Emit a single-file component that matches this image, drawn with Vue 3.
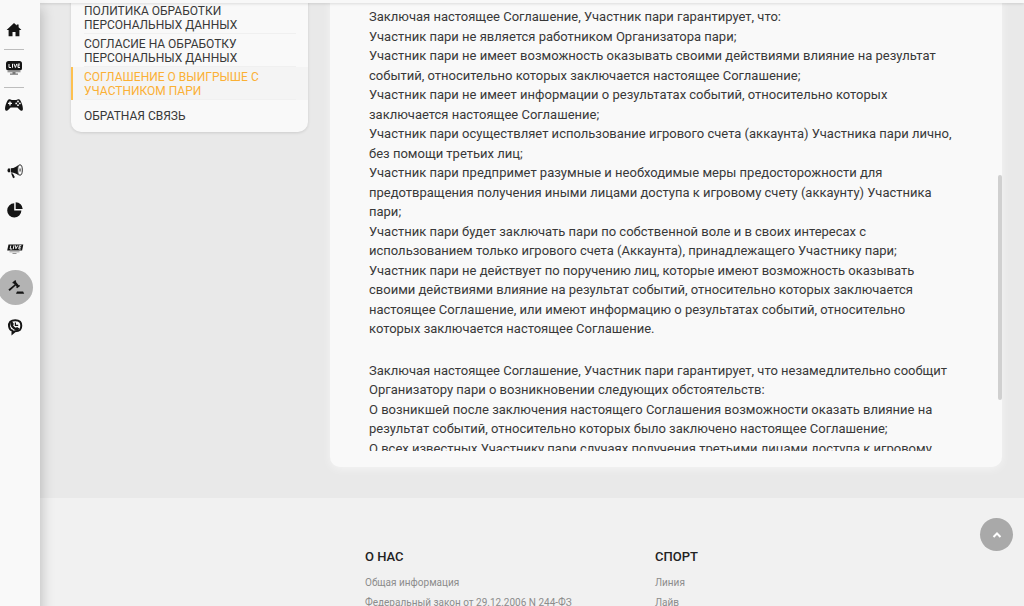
<script setup>
const menu = [
  { label: 'Политика обработки персональных данных' },
  { label: 'Согласие на обработку персональных данных' },
  { label: 'Соглашение о выигрыше с участником пари', active: true },
  { label: 'Обратная связь', tall: true },
]

const sections = [
  [
    'Заключая настоящее Соглашение, Участник пари гарантирует, что:',
    'Участник пари не является работником Организатора пари;',
    'Участник пари не имеет возможность оказывать своими действиями влияние на результат событий, относительно которых заключается настоящее Соглашение;',
    'Участник пари не имеет информации о результатах событий, относительно которых заключается настоящее Соглашение;',
    'Участник пари осуществляет использование игрового счета (аккаунта) Участника пари лично, без помощи третьих лиц;',
    'Участник пари предпримет разумные и необходимые меры предосторожности для предотвращения получения иными лицами доступа к игровому счету (аккаунту) Участника пари;',
    'Участник пари будет заключать пари по собственной воле и в своих интересах с использованием только игрового счета (Аккаунта), принадлежащего Участнику пари;',
    'Участник пари не действует по поручению лиц, которые имеют возможность оказывать своими действиями влияние на результат событий, относительно которых заключается настоящее Соглашение, или имеют информацию о результатах событий, относительно которых заключается настоящее Соглашение.',
  ],
  [
    'Заключая настоящее Соглашение, Участник пари гарантирует, что незамедлительно сообщит Организатору пари о возникновении следующих обстоятельств:',
    'О возникшей после заключения настоящего Соглашения возможности оказать влияние на результат событий, относительно которых было заключено настоящее Соглашение;',
    'О всех известных Участнику пари случаях получения третьими лицами доступа к игровому',
  ],
]

const footer = [
  { title: 'О нас', links: ['Общая информация', 'Федеральный закон от 29.12.2006 N 244-ФЗ'] },
  { title: 'Спорт', links: ['Линия', 'Лайв'] },
]
</script>

<template>
  <div class="page">
    <div class="topbar"></div>

    <nav class="rail" aria-label="Разделы">
      <a class="icon" href="#" aria-label="Главная">
        <svg width="16" height="16" viewBox="0 0 16 16"><path d="M8 1 .6 8h2v6.3h3.9V10h3v4.3h3.9V8h2L12.600 5.300V2.500h-1.800v1.100z" /></svg>
      </a>
      <hr />
      <a class="icon" href="#" aria-label="Лайв">
        <svg width="18" height="16" viewBox="0 0 18 16">
          <rect x="1" y="1" width="16" height="9.600" rx="2.500" />
          <path class="line" d="M4 4v3.500h2M7.500 3.800v3.900M9 3.800l1.400 3.700 1.400-3.700M15 4.100h-2v3.400h2M13 5.800h1.700" />
          <path class="soft" d="M2.500 11.300h13v1h-13zM7.500 12.300h3v1.300h-3zM5 13.500h8v1.200H5z" />
        </svg>
      </a>
      <hr />
      <a class="icon pad" href="#" aria-label="Игры">
        <svg width="20" height="16" viewBox="0 0 20 16">
          <path d="M5 2.300c1.700-.6 2.400.7 3.200.7h3.600c.8 0 1.500-1.300 3.200-.7 2.200.8 4.200 7.600 3.900 10-.2 1.700-2 2-3 .8L13.400 10.600H6.600l-2.500 2.500c-1 1.200-2.800.9-3-.8C.8 9.900 2.800 3.100 5 2.300z" />
          <path class="line wide" d="M6 4.400v4M4 6.400h4" />
          <g class="light"><circle cx="14" cy="4.500" r=".9" /><circle cx="14" cy="8.200" r=".9" /><circle cx="12.200" cy="6.400" r=".9" /><circle cx="15.900" cy="6.400" r=".9" /></g>
        </svg>
      </a>

      <div class="tools">
        <a class="icon" href="#" aria-label="Акции">
          <svg width="18" height="18" viewBox="0 0 18 18">
            <path d="M2 6.500h2.200v3.800H2q-1.200-1.900 0-3.800zM4.900 6.300C8.500 6 10.900 4.500 12.600 2.700v10.700c-1.800-1.700-4.200-2.700-7.700-3zM5 11.300l1.900.3 2 3.700-1.800.9z" />
            <ellipse class="ring" cx="14" cy="8" rx="2.300" ry="5.200" />
            <path class="soft" d="M13.300 6.500h1.600v3h-1.600z" />
          </svg>
        </a>
        <a class="icon" href="#" aria-label="Статистика">
          <svg width="18" height="18" viewBox="0 0 18 18"><path d="M8.200 2.300V9.500h7.200A7.100 7.100 0 1 1 8.200 2.300zM9.700 1.200A7 7 0 0 1 16.700 8.100H9.700z" /></svg>
        </a>
        <a class="icon" href="#" aria-label="Лайв результаты">
          <svg width="18" height="14" viewBox="0 0 18 14">
            <path d="M2.500 2.500h14.800l-1.200 6H1.200z" />
            <path class="line" d="M4.800 3.500 4.100 7h2M8 3.300 7.200 7.200M9.500 3.400l.4 3.300 2-3.300M15.300 3.700h-1.900L12.800 7h1.900M13.200 5.300h1.600" />
            <path class="soft" d="M3.500 9.500h10v.8h-10zM6.500 11.200h4v.8h-4z" />
          </svg>
        </a>
        <a class="icon current" href="#" aria-label="Правила">
          <svg width="18" height="18" viewBox="0 0 18 18">
            <path d="m5.300 3.500 3-2.400.9 1.100-.4.500 2.900 3.600.6-.4.800 1-3 2.400-.9-1.100.4-.5-.9-1.100-6 5.500-1.300-1.500 6.200-5.100-.9-1.200-.6.400zM10 12.600h6.100l1.100 2.200H9z" />
          </svg>
        </a>
        <a class="icon" href="#" aria-label="Заказать звонок">
          <svg width="18" height="18" viewBox="0 0 18 18">
            <path class="thick" d="M4.300 3.700C6.500 1.700 12 1.700 14 3.700c1.700 1.800 1.700 6.200 0 8-1.300 1.200-3 1.500-5 1.500L6.500 15.300v-2.500C2.500 11.700 2.200 6 4.300 3.700z" />
            <path d="M4.300 4.500 6.100 3.200l1.800 2.700-.8 1.300c.6 1.300 1.500 2 2.700 2.500l1.300-.8 2.300 1.500-1.300 1.800C8.500 13 4 9.500 4.300 4.500z" />
            <path class="hand" d="M9.400 4.500v2.900h2.800" />
          </svg>
        </a>
      </div>
    </nav>

    <div class="body">
      <main>
        <aside class="menu">
          <a v-for="m in menu" :key="m.label" href="#" :class="{ active: m.active, tall: m.tall }">
            <span>{{ m.label }}</span>
          </a>
        </aside>
        <article class="card">
          <div class="scroll">
            <section v-for="(s, i) in sections" :key="i">
              <p v-for="p in s" :key="p">{{ p }}</p>
            </section>
          </div>
          <div class="thumb"></div>
        </article>
      </main>

      <footer>
        <section v-for="c in footer" :key="c.title">
          <h2>{{ c.title }}</h2>
          <a v-for="l in c.links" :key="l" href="#">{{ l }}</a>
        </section>
      </footer>
    </div>

    <button class="up" type="button" aria-label="Наверх">
      <svg width="12" height="12" viewBox="0 0 12 12"><path d="m2.500 8 3.500-3.500L9.500 8" /></svg>
    </button>
  </div>
</template>

<style>
body {
  margin: 0;
  background: #f1f1f1;
}
</style>

<style scoped>
.page {
  height: 100vh;
  overflow: hidden;
  position: relative;
  display: grid;
  grid-template-columns: 40px 1fr;
  font-family: Roboto, "Liberation Sans", sans-serif;
  color: #383838;
}
a {
  color: inherit;
  text-decoration: none;
}
.topbar {
  position: absolute;
  inset: 0 0 auto;
  height: 3px;
  background: #f8f8f8;
  box-shadow: 0 1px 3px rgba(0, 0, 0, 0.12);
  z-index: 2;
}
.rail {
  position: relative;
  z-index: 3;
  background: #f9f9f9;
  box-shadow: 2px 8px 12px rgba(0, 0, 0, 0.2);
  padding-top: 12px;
}
.icon {
  display: flex;
  align-items: center;
  justify-content: center;
  width: 28px;
  height: 36px;
}
.rail .pad {
  height: 34px;
}
.rail hr {
  width: 20px;
  margin: 1px 0 0 4px;
  border: 0;
  border-top: 1px solid #bdbdbd;
}
.tools {
  margin-top: 31px;
}
.tools .icon {
  width: 30px;
  height: 35px;
  margin-bottom: 4px;
}
.tools .current {
  width: 35px;
  margin-left: -2px;
  border-radius: 50%;
  background: #b3b3b3;
}
.icon svg {
  fill: #151515;
}
.icon .line,
.icon .hand {
  fill: none;
  stroke: #f9f9f9;
  stroke-width: 1;
}
.icon .wide {
  stroke-width: 1.4;
}
.icon .light {
  fill: #f9f9f9;
}
.icon .soft {
  fill: #777;
}
.icon .ring {
  fill: #f9f9f9;
  stroke: #333;
}
.icon .thick {
  fill: #f9f9f9;
  stroke: #151515;
  stroke-width: 2;
}
.icon .hand {
  stroke: #151515;
  stroke-width: 1.2;
}
.body {
  min-width: 0;
}
main {
  display: grid;
  grid-template-columns: 237px minmax(0, 1fr);
  gap: 22px;
  align-items: start;
  padding: 0 22px 31px 31px;
  background: #e9e9e9;
}
.menu {
  border-radius: 0 0 10px 10px;
  background: #f9f9f9;
  box-shadow: 0 1px 3px rgba(0, 0, 0, 0.12);
  font-size: 12px;
  line-height: 14px;
  text-transform: uppercase;
  overflow: hidden;
  padding-top: 1px;
}
.menu a {
  display: block;
  padding: 0 12px 0 11px;
  border-left: 2px solid transparent;
}
.menu span {
  display: block;
  padding: 3px 32px 1px 0;
  border-bottom: 1px solid #f0f0f0;
}
.menu .active {
  color: #fbb034;
  border-left-color: #fdc04f;
  background: #f4f4f4;
}
.menu .tall span {
  padding: 9px 0;
  border: 0;
}
.card {
  position: relative;
  padding: 7px 44px 16px 39px;
  border-radius: 0 0 10px 10px;
  background: #f9f9f9;
  box-shadow: 0 2px 10px rgba(255, 255, 255, 0.5);
}
.scroll {
  height: 444px;
  overflow: hidden;
  font-size: 13px;
  line-height: 1.5;
}
.scroll p {
  margin: 0;
}
.scroll section + section {
  margin-top: 22px;
}
.thumb {
  position: absolute;
  top: 175px;
  right: 0;
  width: 4px;
  height: 225px;
  border-radius: 2px;
  background: #d0d0d0;
}
footer {
  display: grid;
  grid-template-columns: 290px 290px;
  padding: 48px 0 0 325px;
}
h2 {
  margin: 0 0 5px;
  font-size: 13px;
  line-height: 22px;
  font-weight: 500;
  text-transform: uppercase;
  color: #222;
}
footer a {
  display: block;
  font-size: 10px;
  line-height: 20px;
  color: #8c8c8c;
}
.up {
  position: absolute;
  right: 11px;
  bottom: 55px;
  width: 33px;
  height: 33px;
  padding: 0;
  border: 0;
  border-radius: 50%;
  background: #a9a9a9;
  display: grid;
  place-items: center;
  z-index: 3;
}
.up path {
  fill: none;
  stroke: #fff;
  stroke-width: 2;
}
</style>
